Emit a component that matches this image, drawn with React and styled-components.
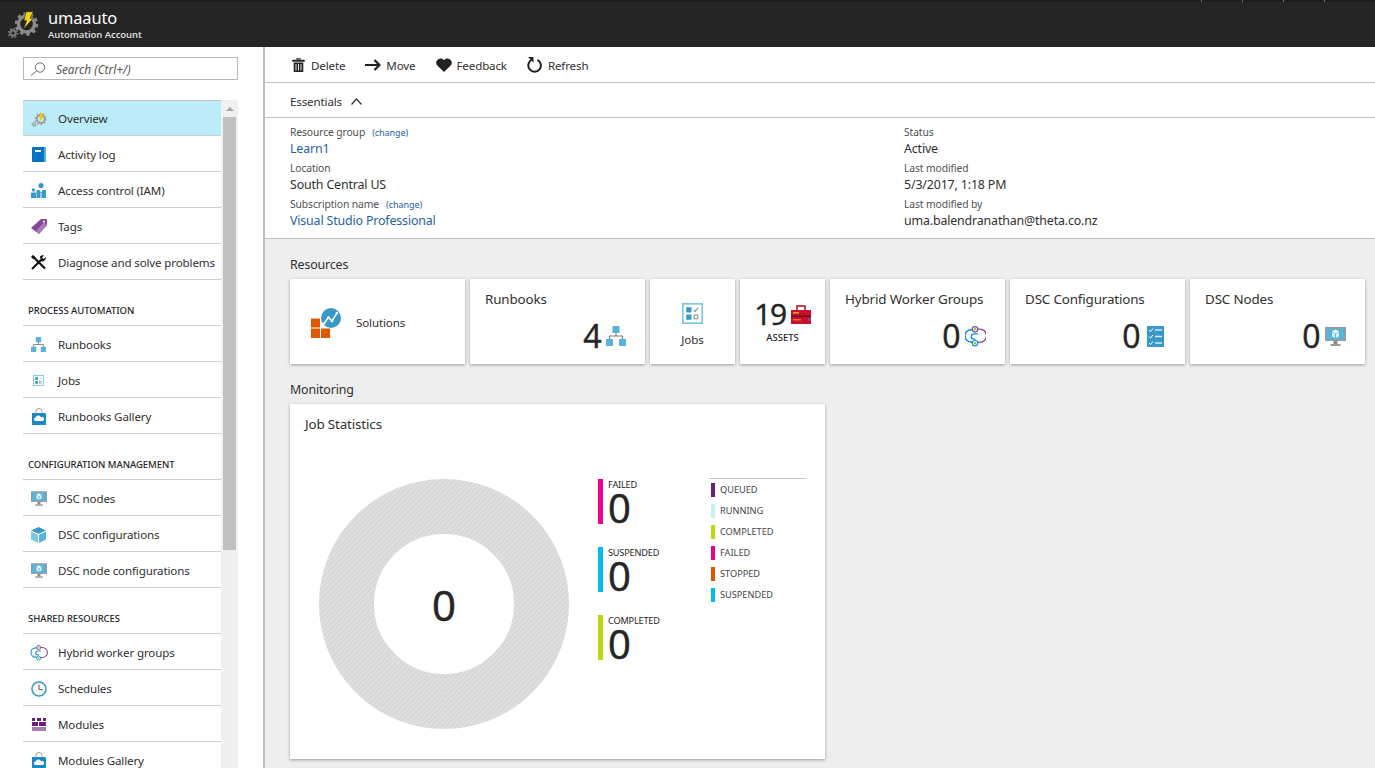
import React from 'react';
import styled, { createGlobalStyle } from 'styled-components';

const FONT = `"Noto Sans", "Open Sans", "Liberation Sans", sans-serif`;
const NUM = `"Open Sans", "Noto Sans", sans-serif`;

const Global = createGlobalStyle`
  html, body { margin: 0; padding: 0; height: 100%; overflow: hidden; }
  body { font-family: ${FONT}; color: #252525; background: #fff; }
  #root { height: 768px; }
  * { box-sizing: border-box; }
`;

const Page = styled.div`
  width: 1375px; height: 768px; display: flex; flex-direction: column; overflow: hidden;
`;
const Header = styled.header`
  height: 47px; flex: none; background: #252525; display: flex; align-items: flex-start; position: relative;
  border-top: 2px solid #1e1e1e; padding: 1px 0 0 7px; gap: 4px;
`;
const Ticks = styled.div`
  position: absolute; top: -2px; right: 10px; display: flex;
`;
const Tick = styled.span`
  width: 41px; height: 2px; border-left: 1px solid #666;
`;
const HeaderText = styled.div`
  display: flex; flex-direction: column; color: #fff; padding-left: 1px;
`;
const Title = styled.div`
  font-size: 16.4px; line-height: 24px; height: 25px; letter-spacing: -0.1px; padding-top: 3px;
`;
const SubTitle = styled.div`
  font-size: 9.5px; line-height: 14px; color: #d8d8d8; font-weight: 600; letter-spacing: -0.1px;
`;
const Body = styled.div`
  flex: 1; display: flex; min-height: 0;
`;
const Side = styled.aside`
  width: 265px; flex: none; border-right: 2px solid #c0c0c0; padding: 10px 25px 0 23px; overflow: hidden;
`;
const SearchBox = styled.div`
  height: 23px; border: 1px solid #b9b9b9; display: flex; align-items: center; padding-left: 6px; gap: 10px;
  font-size: 11.8px; font-style: italic; color: #555; margin-bottom: 20px;
`;
const MenuWrap = styled.div`
  display: flex; position: relative; height: 700px;
`;
const Menu = styled.nav`
  width: 198px; flex: none;
`;
const Row = styled.div`
  height: 36px; display: flex; align-items: center; border-bottom: 1px solid #cdcdcd; padding: 2px 0 0 8px; gap: 12px;
  font-size: 11.6px; color: #303030; letter-spacing: -0.15px; white-space: nowrap;
  background: ${p => (p.$active ? '#bcecf9' : '#fff')};
  box-shadow: ${p => (p.$active ? 'inset 0 1px 0 #c8c8c8' : 'none')};
`;
const IconBox = styled.span`
  width: 15px; height: 16px; flex: none; display: flex; align-items: center; justify-content: center;
  & > svg { display: block; overflow: visible; }
`;
const SectionHead = styled.div`
  height: 46px; display: flex; align-items: flex-end; padding: 0 0 8px 5px; border-bottom: 1px solid #cdcdcd;
  font-size: 9.5px; font-weight: 500; color: #252525; letter-spacing: -0.05px; white-space: nowrap;
`;
const Scroll = styled.div`
  width: 17px; flex: none; background: #f0f0f0; padding: 0 2px; display: flex; flex-direction: column;
`;
const ScrollArrow = styled.div`
  height: 17px; flex: none; display: flex; align-items: center; justify-content: center;
  &::before { content: ''; border: 4px solid transparent; border-bottom: 4px solid #a6a6a6; border-top: 0; }
`;
const Thumb = styled.div`
  height: 433px; background: #c0c0c0; flex: none;
`;
const Main = styled.main`
  flex: 1; min-width: 0; display: flex; flex-direction: column; background: #eee;
`;
const Toolbar = styled.div`
  height: 36px; flex: none; background: #fff; border-bottom: 1px solid #c4c4c4; display: flex; align-items: center;
  padding: 1px 0 0 27px; gap: 20px;
`;
const Tool = styled.div`
  display: flex; align-items: center; gap: 5px; font-size: 11.6px; color: #303030; letter-spacing: -0.15px;
`;
const EssHead = styled.div`
  height: 35px; flex: none; background: #fff; border-bottom: 1px solid #c4c4c4; display: flex; align-items: center;
  padding: 2px 0 0 25px; gap: 9px; font-size: 11.6px; letter-spacing: -0.15px; color: #303030;
`;
const EssBody = styled.div`
  height: 121px; flex: none; background: #fff; border-bottom: 1px solid #c4c4c4; display: grid;
  grid-template-columns: 614px 1fr; padding: 6px 0 0 25px;
`;
const EssCol = styled.div`
  display: flex; flex-direction: column;
`;
const Label = styled.div`
  font-size: 10.3px; line-height: 17px; height: 17px; color: #505050; letter-spacing: -0.1px; white-space: nowrap;
`;
const ChangeLink = styled.span`
  font-size: 9px; color: #1f5fa8; margin-left: 7px; letter-spacing: -0.05px;
`;
const Value = styled.div`
  font-size: 12.4px; line-height: 15px; height: 19px; color: ${p => (p.$link ? '#1f5fa8' : '#303030')};
  letter-spacing: -0.15px; white-space: nowrap;
`;
const Content = styled.div`
  flex: 1; padding: 16px 10px 0 25px; display: flex; flex-direction: column;
`;
const Heading = styled.div`
  font-size: 12.4px; line-height: 20px; height: 20px; color: #303030; letter-spacing: -0.15px;
`;
const Tiles = styled.div`
  display: flex; gap: 5px; margin: 4px 0 16px;
`;
const Tile = styled.div`
  width: ${p => p.$w}px; height: 85px; background: #fff; box-shadow: 0 1px 3px rgba(0,0,0,.35); position: relative; flex: none;
`;
const CountTile = styled(Tile)`
  padding: 9px 0 0 15px; display: flex; flex-direction: column;
`;
const TileTitle = styled.div`
  font-size: 13.4px; line-height: 22px; color: #303030; letter-spacing: -0.15px; white-space: nowrap;
`;
const TileFoot = styled.div`
  display: flex; justify-content: flex-end; align-items: center; gap: 5px; padding-right: 19px; margin-top: 9px;
  height: 34px;
`;
const BigNum = styled.span`
  font-size: 32px; line-height: 34px; color: #252525; letter-spacing: -0.5px; font-family: ${NUM};
  -webkit-text-stroke: 0.5px #252525;
`;
const AssetNum = styled(BigNum)`
  font-size: 30px; letter-spacing: -1.5px;
`;
const SolutionsTile = styled(Tile)`
  display: flex; align-items: center; padding: 2px 0 0 21px; gap: 15px; font-size: 11.6px; color: #303030; letter-spacing: -0.15px;
`;
const JobsTile = styled(Tile)`
  display: flex; flex-direction: column; align-items: center; padding-top: 24px; gap: 8px; font-size: 11.6px; color: #303030; letter-spacing: -0.15px;
`;
const AssetsTile = styled(Tile)`
  display: flex; flex-direction: column; align-items: center; padding-top: 18px;
`;
const AssetTop = styled.div`
  display: flex; align-items: center; gap: 5px; height: 34px;
`;
const AssetLabel = styled.div`
  font-size: 9.5px; line-height: 14px; color: #252525; font-weight: 500;
`;
const JobCard = styled.section`
  width: 535px; height: 355px; background: #fff; box-shadow: 0 1px 3px rgba(0,0,0,.35); flex: none; margin-top: 4px;
  padding: 9px 0 0 15px; position: relative;
`;
const CardBody = styled.div`
  display: flex; margin-top: 21px; position: relative;
`;
const Donut = styled.div`
  width: 250px; height: 250px; flex: none; margin: 23px 0 0 14px; position: relative;
`;
const DonutNum = styled.div`
  position: absolute; inset: 0; display: flex; align-items: center; justify-content: center;
  font-size: 42px; color: #252525; font-family: ${NUM}; -webkit-text-stroke: 0.6px #252525;
`;
const Stats = styled.div`
  width: 111px; flex: none; margin: 23px 0 0 29px; display: flex; flex-direction: column; gap: 23px;
`;
const Stat = styled.div`
  height: 45px; border-left: 5px solid ${p => p.$c}; padding-left: 5px; display: flex; flex-direction: column;
`;
const StatLabel = styled.div`
  font-size: 9.2px; line-height: 11px; color: #252525; letter-spacing: -0.2px; white-space: nowrap;
`;
const StatValue = styled.div`
  font-size: 40px; line-height: 35px; color: #252525; font-family: ${NUM}; -webkit-text-stroke: 0.6px #252525;
`;
const Legend = styled.div`
  width: 97px; flex: none; margin-top: 22px; border-top: 1px solid #c8c8c8; padding: 4px 0 0 2px;
  display: flex; flex-direction: column; gap: 7px; align-self: flex-start;
`;
const LegendItem = styled.div`
  height: 14px; border-left: 4px solid ${p => p.$c}; padding-left: 5px; font-size: 9.2px; line-height: 14px;
  color: #444; letter-spacing: 0; white-space: nowrap;
`;

const Gear = () => (
  <svg width="36" height="36" viewBox="0 0 36 36">
    <g fill="none" stroke="#8b8b8b">
      <circle cx="19.500" cy="21" r="8" strokeWidth="3.400" />
      <circle cx="19.500" cy="21" r="10.400" strokeWidth="2.600" strokeDasharray="3.300 3.230" />
      <circle cx="6" cy="30" r="2.600" strokeWidth="2.200" stroke="#757575" />
      <circle cx="6" cy="30" r="4.400" strokeWidth="1.800" strokeDasharray="1.700 1.750" stroke="#757575" />
    </g>
    <path d="M19 8.700H26.300L23 15.300H26.300L16.300 26.300L19.700 17.700H17Z" fill="#f5d215" stroke="#252525" strokeWidth=".6" />
  </svg>
);
const SmallGear = () => (
  <svg width="16" height="16" viewBox="0 0 36 36">
    <g fill="none" stroke="#9a9a9a">
      <circle cx="22" cy="18" r="9" strokeWidth="4" />
      <circle cx="22" cy="18" r="12" strokeWidth="3" strokeDasharray="3.600 3.900" />
      <circle cx="7" cy="30" r="3" strokeWidth="2.400" />
      <circle cx="7" cy="30" r="5" strokeWidth="2" strokeDasharray="2 1.900" />
    </g>
    <path d="M21 5h8l-4 8h4L17 27l4-11h-3z" fill="#f2c811" />
  </svg>
);
const Book = () => (
  <svg width="14" height="16" viewBox="0 0 14 16">
    <path d="M0 1a1 1 0 0 1 1-1h13v15H1a1 1 0 0 1-1-1z" fill="#0072c6" />
    <rect x="12" y="0" width="2" height="15" fill="#59b4d9" />
    <rect x="3" y="3" width="6" height="2" fill="#fff" />
  </svg>
);
const People = () => (
  <svg width="15" height="15" viewBox="0 0 15 15">
    <circle cx="10" cy="2.600" r="2.600" fill="#3999c6" />
    <path d="M5.500 7h9.500v8H5.500z" fill="#3999c6" />
    <circle cx="2.400" cy="7" r="1.700" fill="#3999c6" />
    <path d="M0 9.500h5V15H0z" fill="#3999c6" />
    <path d="M8.500 7l1.500 3 1.500-3zM9.500 10h1v5h-1z" fill="#fff" />
  </svg>
);
const TagIcon = () => (
  <svg width="16" height="15" viewBox="0 0 16 15">
    <path d="M10 0h5a1 1 0 0 1 1 1v5l-8 9-8-6z" fill="#804998" />
    <path d="M5 12l8-9 3 3-8 9z" fill="#a67bb8" />
    <circle cx="13" cy="2.600" r="1" fill="#fff" />
  </svg>
);
const Tools = () => (
  <svg width="15" height="15" viewBox="0 0 15 15">
    <path d="M1 14L10 5" stroke="#111" strokeWidth="2.200" />
    <path d="M9 1.500a3.400 3.400 0 0 1 4-1l-2 2 1.600 1.600 2-2a3.400 3.400 0 0 1-4.700 4z" fill="#111" />
    <path d="M1.500 1L14 13.500" stroke="#111" strokeWidth="2.200" />
    <path d="M0 2l2-2 2.500 2.500-2 2z" fill="#111" />
  </svg>
);
const Org = ({ s = 15 }) => (
  <svg width={s} height={s} viewBox="0 0 20 20">
    <path d="M10 6v4M3.500 14v-4h13v4" stroke="#7f7f7f" strokeWidth="1.200" fill="none" />
    <rect x="6.500" y="0" width="7" height="7" fill="#59b4d9" />
    <rect x="0" y="13" width="7" height="7" fill="#59b4d9" />
    <rect x="13" y="13" width="7" height="7" fill="#59b4d9" />
  </svg>
);
const JobsIcon = ({ s = 11 }) => (
  <svg width={s} height={s} viewBox="0 0 20 20">
    <rect x=".8" y=".8" width="18.400" height="18.400" fill="#fff" stroke="#7cc7e3" strokeWidth="1.600" />
    <rect x="4" y="4" width="5" height="5" fill="#3999c6" />
    <rect x="4" y="11" width="5" height="5" fill="#3999c6" />
    <path d="M11 6.500l1.500 1.500L15.500 4.500" stroke="#8a8a8a" strokeWidth="1" fill="none" />
    <rect x="11.500" y="11.500" width="3.500" height="3.500" stroke="#8a8a8a" strokeWidth="1" fill="none" />
  </svg>
);
const Bag = () => (
  <svg width="14" height="16" viewBox="0 0 14 16">
    <path d="M4 4V2.500a3 3 0 0 1 6 0V4" stroke="#a0a0a0" fill="none" />
    <path d="M0 4h13l1 1v11H0z" fill="#1e88c4" />
    <path d="M3 12a1.800 1.800 0 0 1 .6-3.400 3 3 0 0 1 5.600-.4 2 2 0 0 1 1.600 3.800z" fill="#fff" />
  </svg>
);
const Monitor = ({ w = 16, h = 15 }) => (
  <svg width={w} height={h} viewBox="0 0 21 19">
    <rect x="0" y="0" width="21" height="14" fill="#9a9a9a" />
    <rect x="1.500" y="1.500" width="18" height="11" fill="#59b4d9" />
    <path d="M10.500 2.500l3.500 2-3.500 2-3.500-2z" fill="#fff" />
    <path d="M7 5.200l3 1.800v4l-3-1.800zM14 5.200l-3 1.800v4l3-1.800z" fill="#dff3fa" />
    <rect x="8.500" y="14" width="4" height="3" fill="#8a8a8a" />
    <rect x="5.500" y="17" width="10" height="2" fill="#9a9a9a" />
  </svg>
);
const Cube = () => (
  <svg width="15" height="16" viewBox="0 0 15 16">
    <path d="M7.500 0L15 3.400 7.500 6.800 0 3.400z" fill="#3999c6" />
    <path d="M0 4.600l7 3.200V16l-7-3.400z" fill="#7fc6e4" />
    <path d="M15 4.600L8 7.800V16l7-3.400z" fill="#59b4d9" />
  </svg>
);
const Hybrid = ({ s = 16 }) => (
  <svg width={s} height={s} viewBox="0 0 20 20">
    <path d="M10 3h4.200a6.300 6.300 0 0 1 0 12.600H10" stroke="#804998" strokeWidth="1.300" fill="none" />
    <path d="M9 3.600H5.800a5.800 5.800 0 0 0 0 11.600H9" stroke="#0f8fd8" strokeWidth="1.300" fill="none" />
    <path d="M12.500 7.500H8.500a2.500 2.500 0 0 0 0 5h1.500" stroke="#0f8fd8" strokeWidth="1.300" fill="none" />
    <circle cx="9.500" cy="3.200" r="2.600" fill="#fff" stroke="#804998" strokeWidth="1.100" />
    <circle cx="9.500" cy="3.200" r="1.200" fill="#95c11f" />
    <circle cx="9.500" cy="16.400" r="2.600" fill="#fff" stroke="#0f8fd8" strokeWidth="1.100" />
    <circle cx="9.500" cy="16.400" r="1.200" fill="#95c11f" />
  </svg>
);
const Clock = () => (
  <svg width="16" height="16" viewBox="0 0 16 16">
    <circle cx="8" cy="8" r="7" fill="#fff" stroke="#3999c6" strokeWidth="1.600" />
    <path d="M8 3.500V8.500h3.500" stroke="#555" strokeWidth="1" fill="none" />
  </svg>
);
const Modules = () => (
  <svg width="14" height="13" viewBox="0 0 14 13">
    <path d="M0 0h3v3H0zM5 0h4v3H5zM11 0h3v3h-3zM0 4h6v4H0zM7 4h7v4H7z" fill="#68217a" />
    <path d="M0 9h14v4H0z" fill="#a67bb8" />
  </svg>
);
const Trash = () => (
  <svg width="14" height="14" viewBox="0 0 14 14">
    <path d="M4.500 1.500V.5h4v1M.5 2h12v1.400H.5z" fill="#222" stroke="#222" strokeWidth=".5" />
    <path d="M1.700 4.500h9.600V14H1.700z" fill="#222" />
    <path d="M4 6v6.500M6.500 6v6.500M9 6v6.500" stroke="#fff" strokeWidth=".9" />
  </svg>
);
const ArrowR = () => (
  <svg width="16" height="12" viewBox="0 0 16 12">
    <path d="M0 6h14.500M9.500 1l5 5-5 5" stroke="#222" strokeWidth="2.200" fill="none" />
  </svg>
);
const Heart = () => (
  <svg width="16" height="14" viewBox="0 0 16 14">
    <path d="M8 14L1.300 7.400A4.200 4.200 0 0 1 4.400 0.400C6 .4 7.200 1 8 2.200 8.800 1 10 .4 11.600.4a4.200 4.200 0 0 1 3.100 7z" fill="#222" />
  </svg>
);
const RefreshI = () => (
  <svg width="16" height="16" viewBox="0 0 16 16">
    <path d="M10.500 2.800a6.300 6.300 0 1 1-6 .1" stroke="#222" strokeWidth="2" fill="none" />
    <path d="M1 0h5.500v5.500z" fill="#222" />
  </svg>
);
const Search = () => (
  <svg width="16" height="14" viewBox="0 0 16 14">
    <circle cx="10" cy="5.500" r="4.700" fill="none" stroke="#666" />
    <path d="M6.500 9L1 13.500" stroke="#666" strokeWidth="1" />
  </svg>
);
const Chevron = () => (
  <svg width="11" height="7" viewBox="0 0 11 7">
    <path d="M.5 6.500l5-5.500 5 5.500" stroke="#333" strokeWidth="1.200" fill="none" />
  </svg>
);
const SolutionsI = () => (
  <svg width="30" height="30" viewBox="0 0 30 30">
    <rect x="0" y="10.500" width="9" height="9" fill="#dd5900" />
    <rect x="0" y="20.500" width="9" height="9.500" fill="#dd5900" />
    <rect x="10" y="20.500" width="9" height="9.500" fill="#dd5900" />
    <circle cx="20" cy="10" r="10.200" fill="#fff" />
    <circle cx="20" cy="10" r="10" fill="#3999c6" />
    <path d="M13 15.500l4.500-6 3.500 3.500 5-8" stroke="#fff" strokeWidth="1.500" fill="none" />
    <circle cx="13" cy="15.500" r="1.300" fill="#fff" /><circle cx="17.500" cy="9.500" r="1.300" fill="#fff" />
    <circle cx="21" cy="13" r="1.300" fill="#fff" /><circle cx="26" cy="5" r="1.300" fill="#fff" />
  </svg>
);
const Toolbox = () => (
  <svg width="20" height="19" viewBox="0 0 20 19">
    <path d="M6 5V1h8v4" stroke="#b00d20" strokeWidth="1.500" fill="none" />
    <rect x="0" y="5" width="20" height="14" fill="#c8102e" />
    <rect x="0" y="10.500" width="20" height="1.500" fill="#7a0818" />
    <rect x="2" y="7" width="6" height="1.500" fill="#f0a030" />
    <rect x="2" y="14" width="8" height="1.500" fill="#e8703a" />
    <rect x="17" y="13" width="3" height="3" fill="#804998" />
  </svg>
);
const ChecklistI = () => (
  <svg width="21" height="21" viewBox="-2 0 21 21">
    <rect width="17" height="21" fill="#3999c6" />
    <path d="M2 4l1.500 1.500L6 2.500M2 10.500l1.500 1.500L6 9M2 17l1.500 1.500L6 15.500" stroke="#fff" fill="none" />
    <path d="M8 4h7M8 10.500h7M8 17h7" stroke="#cfe8f3" strokeWidth="1.400" />
  </svg>
);

const C = { queued: '#68217a', running: '#c7f0fb', completed: '#bad80a', failed: '#ec008c', stopped: '#dd5900', suspended: '#00bcf2' };

const menu = [
  { type: 'rows', items: [
    ['Overview', <SmallGear />, true], ['Activity log', <Book />], ['Access control (IAM)', <People />], ['Tags', <TagIcon />], ['Diagnose and solve problems', <Tools />],
  ] },
  { type: 'head', label: 'PROCESS AUTOMATION' },
  { type: 'rows', items: [['Runbooks', <Org />], ['Jobs', <JobsIcon />], ['Runbooks Gallery', <Bag />]] },
  { type: 'head', label: 'CONFIGURATION MANAGEMENT' },
  { type: 'rows', items: [['DSC nodes', <Monitor />], ['DSC configurations', <Cube />], ['DSC node configurations', <Monitor />]] },
  { type: 'head', label: 'SHARED RESOURCES' },
  { type: 'rows', items: [['Hybrid worker groups', <Hybrid />], ['Schedules', <Clock />], ['Modules', <Modules />], ['Modules Gallery', <Bag />]] },
];

export default function App() {
  return (
    <Page>
      <Global />
      <Header>
        <Ticks><Tick /><Tick /><Tick /><Tick /></Ticks>
        <Gear />
        <HeaderText>
          <Title>umaauto</Title>
          <SubTitle>Automation Account</SubTitle>
        </HeaderText>
      </Header>
      <Body>
        <Side>
          <SearchBox><Search />Search (Ctrl+/)</SearchBox>
          <MenuWrap>
            <Menu>
              {menu.map((m, i) => m.type === 'head'
                ? <SectionHead key={i}>{m.label}</SectionHead>
                : m.items.map(([t, ic, a]) => <Row key={t} $active={a}><IconBox>{ic}</IconBox>{t}</Row>))}
            </Menu>
            <Scroll><ScrollArrow /><Thumb /></Scroll>
          </MenuWrap>
        </Side>
        <Main>
          <Toolbar>
            <Tool><Trash />Delete</Tool>
            <Tool><ArrowR />Move</Tool>
            <Tool><Heart />Feedback</Tool>
            <Tool><RefreshI />Refresh</Tool>
          </Toolbar>
          <EssHead>Essentials <Chevron /></EssHead>
          <EssBody>
            <EssCol>
              <Label>Resource group<ChangeLink>(change)</ChangeLink></Label>
              <Value $link>Learn1</Value>
              <Label>Location</Label>
              <Value>South Central US</Value>
              <Label>Subscription name<ChangeLink>(change)</ChangeLink></Label>
              <Value $link>Visual Studio Professional</Value>
            </EssCol>
            <EssCol>
              <Label>Status</Label>
              <Value>Active</Value>
              <Label>Last modified</Label>
              <Value>5/3/2017, 1:18 PM</Value>
              <Label>Last modified by</Label>
              <Value>uma.balendranathan@theta.co.nz</Value>
            </EssCol>
          </EssBody>
          <Content>
            <Heading>Resources</Heading>
            <Tiles>
              <SolutionsTile $w={175}><SolutionsI />Solutions</SolutionsTile>
              <CountTile $w={175}><TileTitle>Runbooks</TileTitle><TileFoot><BigNum>4</BigNum><Org s={20} /></TileFoot></CountTile>
              <JobsTile $w={85}><JobsIcon s={21} />Jobs</JobsTile>
              <AssetsTile $w={85}><AssetTop><AssetNum>19</AssetNum><Toolbox /></AssetTop><AssetLabel>ASSETS</AssetLabel></AssetsTile>
              <CountTile $w={175}><TileTitle>Hybrid Worker Groups</TileTitle><TileFoot><BigNum>0</BigNum><Hybrid s={21} /></TileFoot></CountTile>
              <CountTile $w={175}><TileTitle>DSC Configurations</TileTitle><TileFoot><BigNum>0</BigNum><ChecklistI /></TileFoot></CountTile>
              <CountTile $w={175}><TileTitle>DSC Nodes</TileTitle><TileFoot><BigNum>0</BigNum><Monitor w={21} h={19} /></TileFoot></CountTile>
            </Tiles>
            <Heading>Monitoring</Heading>
            <JobCard>
              <TileTitle>Job Statistics</TileTitle>
              <CardBody>
                <Donut>
                  <svg width="250" height="250" viewBox="0 0 250 250">
                    <defs>
                      <pattern id="hatch" width="3.500" height="3.500" patternUnits="userSpaceOnUse" patternTransform="rotate(45)">
                        <rect width="3.500" height="3.500" fill="#d8d8d8" />
                        <rect width="1" height="3.500" fill="#e4e4e4" />
                      </pattern>
                    </defs>
                    <circle cx="125" cy="125" r="97.500" fill="none" stroke="url(#hatch)" strokeWidth="55" />
                    <path d="M125 196v54" stroke="#e3d4ea" />
                  </svg>
                  <DonutNum>0</DonutNum>
                </Donut>
                <Stats>
                  <Stat $c={C.failed}><StatLabel>FAILED</StatLabel><StatValue>0</StatValue></Stat>
                  <Stat $c={C.suspended}><StatLabel>SUSPENDED</StatLabel><StatValue>0</StatValue></Stat>
                  <Stat $c={C.completed}><StatLabel>COMPLETED</StatLabel><StatValue>0</StatValue></Stat>
                </Stats>
                <Legend>
                  <LegendItem $c={C.queued}>QUEUED</LegendItem>
                  <LegendItem $c={C.running}>RUNNING</LegendItem>
                  <LegendItem $c={C.completed}>COMPLETED</LegendItem>
                  <LegendItem $c={C.failed}>FAILED</LegendItem>
                  <LegendItem $c={C.stopped}>STOPPED</LegendItem>
                  <LegendItem $c={C.suspended}>SUSPENDED</LegendItem>
                </Legend>
              </CardBody>
            </JobCard>
          </Content>
        </Main>
      </Body>
    </Page>
  );
}
